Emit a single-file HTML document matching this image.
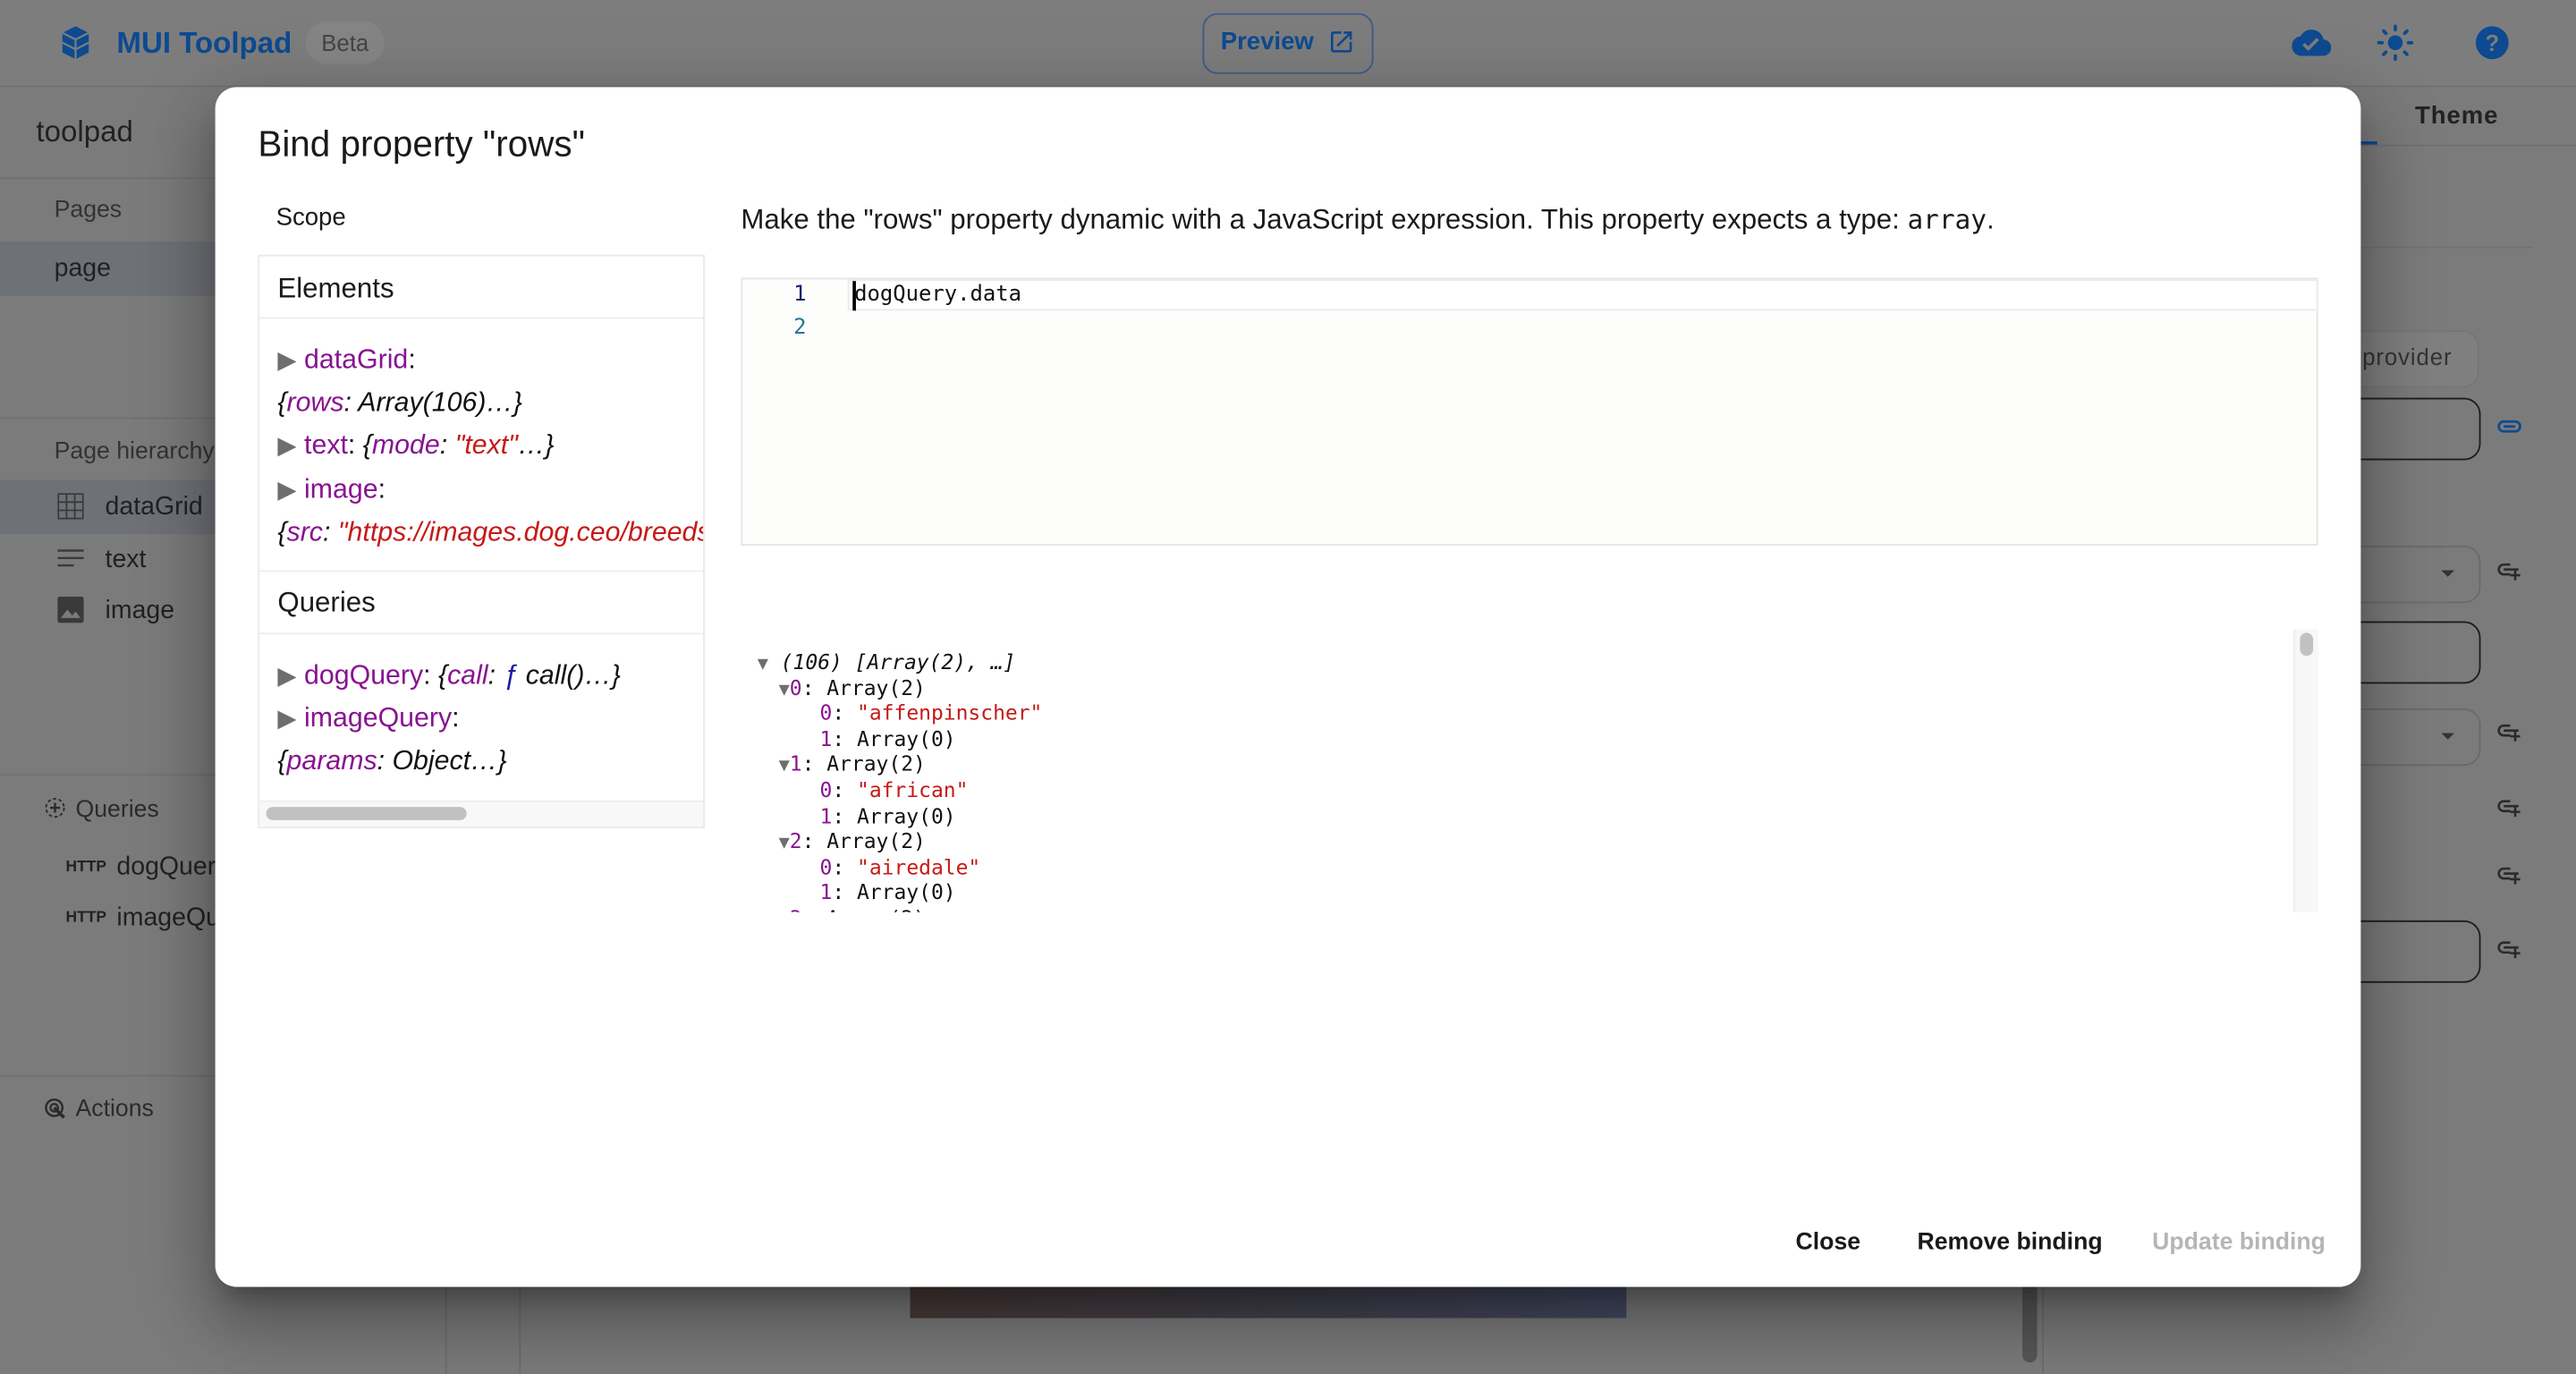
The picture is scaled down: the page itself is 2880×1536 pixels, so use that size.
<!DOCTYPE html>
<html><head><meta charset="utf-8"><style>
html,body{margin:0;padding:0;width:2880px;height:1536px;overflow:hidden;background:#7b7b7b}
#w{position:absolute;left:0;top:0;width:1568px;height:836px;transform:scale(1.83673,1.83732);transform-origin:0 0;font-family:"Liberation Sans",sans-serif;background:#7b7b7b;overflow:hidden}
.a{position:absolute;white-space:nowrap}
.dk{color:#1f2124}
.mono{font-family:"DejaVu Sans Mono","Liberation Mono",monospace}
.pu{color:#881391}.rd{color:#c41a16}
.tri{color:#6e6e6e;font-size:15px}
.jt div{height:15.6px}
.tr div{height:26.2px}
</style></head><body><div id="w">
<div class="a" style="left:0;top:0;width:1568px;height:52px;background:#7d7d7d;border-bottom:1px solid #717171"></div>
<svg class="a" style="left:36px;top:15px" width="20" height="22" viewBox="0 0 20 22"><path d="M2 5l8-4 8 4v12l-8 4-8-4z" fill="#0d4a91"/><path d="M2 5l8 4 8-4M10 9v12M2 11l8 4 8-4" stroke="#7d7d7d" stroke-width="1.2" fill="none"/></svg>
<div class="a" style="left:71px;top:16px;font-size:18px;font-weight:bold;color:#0d4a91">MUI Toolpad</div>
<div class="a" style="left:186px;top:13px;width:48px;height:26px;border-radius:13px;background:#858585;color:#444;font-size:14px;text-align:center;line-height:26px">Beta</div>
<div class="a" style="left:732px;top:8px;width:102px;height:35px;border:1px solid #3e5d86;border-radius:9px"></div>
<div class="a" style="left:743px;top:17px;font-size:15px;font-weight:bold;color:#0d4a91">Preview</div>
<svg class="a" style="left:808px;top:17px" width="17" height="17" viewBox="0 0 24 24"><path d="M19 19H5V5h7V3H5a2 2 0 0 0-2 2v14a2 2 0 0 0 2 2h14a2 2 0 0 0 2-2v-7h-2v7zM14 3v2h3.6l-9.8 9.8 1.4 1.4L19 6.4V10h2V3h-7z" fill="#0d4a91"/></svg>
<svg class="a" style="left:1395px;top:14px" width="24" height="24" viewBox="0 0 24 24"><path d="M19.35 10.04A7.49 7.49 0 0 0 12 4C9.11 4 6.6 5.64 5.35 8.04A5.994 5.994 0 0 0 0 14c0 3.310 2.69 6 6 6h13c2.76 0 5-2.240 5-5 0-2.640-2.050-4.780-4.650-4.960zM10 17l-3.5-3.5 1.41-1.41L10 14.17 15.18 9l1.41 1.41L10 17z" fill="#0d4a91"/></svg>
<svg class="a" style="left:1446px;top:14px" width="24" height="24" viewBox="0 0 24 24"><circle cx="12" cy="12" r="4.5" fill="#0d4a91"/><g stroke="#0d4a91" stroke-width="2" stroke-linecap="round"><path d="M12 2v2M12 20v2M2 12h2M20 12h2M4.9 4.9l1.4 1.4M17.7 17.7l1.4 1.4M4.9 19.1l1.4-1.4M17.7 6.3l1.4-1.4"/></g></svg>
<svg class="a" style="left:1505px;top:14px" width="24" height="24" viewBox="0 0 24 24"><circle cx="12" cy="12" r="10" fill="#0d4a91"/><text x="12" y="17" font-size="14" font-weight="bold" fill="#7d7d7d" text-anchor="middle" font-family="Liberation Sans">?</text></svg>
<div class="a dk" style="left:22px;top:70px;font-size:18px">toolpad</div>
<div class="a" style="left:0;top:108px;width:131px;height:1px;background:#717171"></div>
<div class="a" style="left:33px;top:120px;font-size:14.5px;color:#333">Pages</div>
<div class="a" style="left:0;top:147px;width:131px;height:33px;background:#6e7176"></div>
<div class="a dk" style="left:33px;top:155px;font-size:15.5px">page</div>
<div class="a" style="left:0;top:254px;width:131px;height:1px;background:#717171"></div>
<div class="a" style="left:33px;top:267px;font-size:14.5px;color:#333">Page hierarchy</div>
<div class="a" style="left:0;top:292px;width:131px;height:33px;background:#6e7176"></div>
<svg class="a" style="left:35px;top:300px" width="16" height="16" viewBox="0 0 16 16"><rect x="0.5" y="0.5" width="15" height="15" fill="none" stroke="#3a3a3a"/><path d="M5.5 0v16M10.5 0v16M0 5.5h16M0 10.5h16" stroke="#3a3a3a"/></svg>
<div class="a dk" style="left:64px;top:300px;font-size:15.5px">dataGrid</div>
<svg class="a" style="left:35px;top:334px" width="16" height="12"><path d="M0 1h16M0 5.5h16M0 10h10" stroke="#3a3a3a" stroke-width="1.3"/></svg>
<div class="a dk" style="left:64px;top:332px;font-size:15.5px">text</div>
<svg class="a" style="left:35px;top:363px" width="16" height="16" viewBox="0 0 16 16"><rect width="16" height="16" rx="1.5" fill="#3a3a3a"/><path d="M2 13l4-5 3 3.5 2-2.5 3 4z" fill="#7b7b7b"/></svg>
<div class="a dk" style="left:64px;top:363px;font-size:15.5px">image</div>
<div class="a" style="left:0;top:471px;width:131px;height:1px;background:#717171"></div>
<svg class="a" style="left:27px;top:485px" width="13" height="13" viewBox="0 0 13 13"><circle cx="6.5" cy="6.5" r="5.5" fill="none" stroke="#2a2a2a" stroke-dasharray="2 1.5"/><path d="M6.5 3.5v6M3.5 6.5h6" stroke="#2a2a2a" stroke-width="1.3"/></svg>
<div class="a" style="left:46px;top:485px;font-size:14.5px;color:#2b2b2b">Queries</div>
<div class="a" style="left:40px;top:522px;font-size:9.5px;font-weight:bold;color:#222">HTTP</div>
<div class="a dk" style="left:71px;top:519px;font-size:15.5px">dogQuery</div>
<div class="a" style="left:40px;top:553px;font-size:9.5px;font-weight:bold;color:#222">HTTP</div>
<div class="a dk" style="left:71px;top:550px;font-size:15.5px">imageQuery</div>
<div class="a" style="left:0;top:654px;width:131px;height:1px;background:#717171"></div>
<svg class="a" style="left:27px;top:668px" width="13" height="13" viewBox="0 0 13 13"><circle cx="6" cy="6" r="5" fill="none" stroke="#2a2a2a" stroke-width="1.3"/><circle cx="6" cy="6" r="2.3" fill="none" stroke="#2a2a2a" stroke-width="1.2"/><path d="M6 6l6 6" stroke="#2a2a2a" stroke-width="2"/></svg>
<div class="a" style="left:46px;top:667px;font-size:14.5px;color:#2b2b2b">Actions</div>
<div class="a" style="left:271px;top:783px;width:1px;height:60px;background:#6e6e6e"></div>
<div class="a" style="left:316px;top:783px;width:1px;height:60px;background:#6e6e6e"></div>
<div class="a" style="left:554px;top:783px;width:436px;height:19px;background:linear-gradient(90deg,#4b3b3a,#43424d 50%,#454a63)"></div>
<div class="a" style="left:1231px;top:783px;width:9px;height:46px;background:#575757;border-radius:0 0 5px 5px"></div>
<div class="a" style="left:1243px;top:783px;width:1px;height:60px;background:#6e6e6e"></div>
<div class="a" style="left:1437px;top:88px;width:131px;height:1px;background:#717171"></div>
<div class="a" style="left:1437px;top:86px;width:10px;height:2px;background:#0d4a91"></div>
<div class="a" style="left:1470px;top:62px;font-size:15px;font-weight:bold;color:#222;letter-spacing:.5px">Theme</div>
<div class="a" style="left:1437px;top:150px;width:105px;height:1px;background:#737373"></div>
<div class="a" style="left:1400px;top:201px;width:107px;height:33px;border-radius:10px;background:#7f7f7f;border:1px solid #767676"></div>
<div class="a" style="left:1438px;top:209px;font-size:14px;color:#333;letter-spacing:.5px">provider</div>
<div class="a" style="left:1400px;top:242px;width:108px;height:36px;border:1px solid #1e1e1e;border-radius:10px"></div>
<div class="a" style="left:1400px;top:332px;width:108px;height:33px;border:1px solid #6a6a6a;border-radius:10px"></div>
<div class="a" style="left:1486px;top:347px;border:4px solid transparent;border-top:4px solid #333"></div>
<div class="a" style="left:1400px;top:378px;width:108px;height:36px;border:1px solid #1e1e1e;border-radius:10px"></div>
<div class="a" style="left:1400px;top:431px;width:108px;height:33px;border:1px solid #6a6a6a;border-radius:10px"></div>
<div class="a" style="left:1486px;top:446px;border:4px solid transparent;border-top:4px solid #333"></div>
<div class="a" style="left:1400px;top:560px;width:108px;height:36px;border:1px solid #1e1e1e;border-radius:10px"></div>
<svg class="a" style="left:1520px;top:255px" width="15" height="10"><rect x="1" y="1.5" width="13" height="6" rx="3" fill="none" stroke="#0d4a91" stroke-width="1.5"/><path d="M4 4.5h7" stroke="#0d4a91" stroke-width="1.5"/></svg>
<svg class="a" style="left:1520px;top:342px" width="15" height="12"><path d="M8 1.5H4a3 3 0 0 0 0 6h4M4 4.5h9M11 4v7M8 8h6" stroke="#2a2a2a" stroke-width="1.4" fill="none"/></svg>
<svg class="a" style="left:1520px;top:440px" width="15" height="12"><path d="M8 1.5H4a3 3 0 0 0 0 6h4M4 4.5h9M11 4v7M8 8h6" stroke="#2a2a2a" stroke-width="1.4" fill="none"/></svg>
<svg class="a" style="left:1520px;top:486px" width="15" height="12"><path d="M8 1.5H4a3 3 0 0 0 0 6h4M4 4.5h9M11 4v7M8 8h6" stroke="#2a2a2a" stroke-width="1.4" fill="none"/></svg>
<svg class="a" style="left:1520px;top:527px" width="15" height="12"><path d="M8 1.5H4a3 3 0 0 0 0 6h4M4 4.5h9M11 4v7M8 8h6" stroke="#2a2a2a" stroke-width="1.4" fill="none"/></svg>
<svg class="a" style="left:1520px;top:572px" width="15" height="12"><path d="M8 1.5H4a3 3 0 0 0 0 6h4M4 4.5h9M11 4v7M8 8h6" stroke="#2a2a2a" stroke-width="1.4" fill="none"/></svg>
<div class="a" style="left:131px;top:53px;width:1306px;height:730px;background:#fff;border-radius:13px;box-shadow:0 11px 15px -7px rgba(0,0,0,.3),0 24px 38px 3px rgba(0,0,0,.2),0 9px 46px 8px rgba(0,0,0,.15)"></div>
<div class="a" style="left:157px;top:75px;font-size:22px;color:#1a1a1a">Bind property "rows"</div>
<div class="a" style="left:168px;top:124px;font-size:15px;color:#1a1a1a">Scope</div>
<div class="a" style="left:157px;top:155px;width:270px;height:347px;border:1px solid #eaeaea;overflow:hidden">
 <div class="a" style="left:11px;top:10px;font-size:17px;color:#1a1a1a">Elements</div>
 <div class="a" style="left:0;top:37px;width:272px;height:1px;background:#eeeeee"></div>
 <div class="a tr" style="left:11px;top:50px;font-size:16.5px;line-height:26.2px;color:#111">
  <div><span class="tri">▶</span> <span class="pu">dataGrid</span>:</div>
  <div style="font-style:italic"><span>{</span><span class="pu">rows</span>: Array(106)…}</div>
  <div><span class="tri">▶</span> <span class="pu">text</span>: <i>{<span class="pu">mode</span>: <span class="rd">"text"</span>…}</i></div>
  <div><span class="tri">▶</span> <span class="pu">image</span>:</div>
  <div style="font-style:italic">{<span class="pu">src</span>: <span class="rd">"https://images.dog.ceo/breeds/</span></div>
 </div>
 <div class="a" style="left:0;top:191px;width:272px;height:1px;background:#eeeeee"></div>
 <div class="a" style="left:11px;top:201px;font-size:17px;color:#1a1a1a">Queries</div>
 <div class="a" style="left:0;top:229px;width:272px;height:1px;background:#eeeeee"></div>
 <div class="a tr" style="left:11px;top:242px;font-size:16.5px;line-height:26.2px;color:#111">
  <div><span class="tri">▶</span> <span class="pu">dogQuery</span>: <i>{<span class="pu">call</span>: <span style="color:#1a1aa6">ƒ</span> call()…}</i></div>
  <div><span class="tri">▶</span> <span class="pu">imageQuery</span>:</div>
  <div style="font-style:italic">{<span class="pu">params</span>: Object…}</div>
 </div>
 <div class="a" style="left:0;top:331px;width:272px;height:16px;background:#f8f8f8;border-top:1px solid #eee"></div>
 <div class="a" style="left:4px;top:335px;width:122px;height:8px;border-radius:4px;background:#c1c1c1"></div>
</div>
<div class="a" style="left:451px;top:124px;font-size:17px;color:#1a1a1a">Make the "rows" property dynamic with a JavaScript expression. This property expects a type: <span class="mono" style="font-size:16px">array</span>.</div>
<div class="a" style="left:451px;top:169px;width:958px;height:161px;background:#fdfdfc;border:1px solid #e5e5e5"></div>
<div class="a" style="left:516px;top:170px;width:893px;height:17px;border:1px solid #eaeaea;background:#fff"></div>
<div class="a mono" style="left:483px;top:172px;font-size:13px;color:#0b216f">1</div>
<div class="a mono" style="left:483px;top:192px;font-size:13px;color:#237893">2</div>
<div class="a" style="left:519px;top:171px;width:1.5px;height:18px;background:#000"></div>
<div class="a mono" style="left:520px;top:172px;font-size:13px;color:#111">dogQuery.data</div>
<div class="a" style="left:451px;top:383px;width:960px;height:172px;overflow:hidden">
 <div class="a" style="left:945px;top:0;width:15px;height:172px;background:#f7f7f7;border-left:1px solid #eee;border-right:1px solid #eee"></div>
 <div class="a" style="left:949px;top:2px;width:8px;height:14px;border-radius:4px;background:#c1c1c1"></div>
 <div class="a mono jt" style="left:10px;top:12px;font-size:12.5px;line-height:15.6px;color:#111">
  <div><span style="color:#6e6e6e;font-size:11px">▼</span> <i>(106) [Array(2), …]</i></div>
  <div style="padding-left:13px"><span style="color:#6e6e6e;font-size:11px">▼</span><span class="pu">0</span>: Array(2)</div>
  <div style="padding-left:38px"><span class="pu">0</span>: <span class="rd">"affenpinscher"</span></div>
  <div style="padding-left:38px"><span class="pu">1</span>: Array(0)</div>
  <div style="padding-left:13px"><span style="color:#6e6e6e;font-size:11px">▼</span><span class="pu">1</span>: Array(2)</div>
  <div style="padding-left:38px"><span class="pu">0</span>: <span class="rd">"african"</span></div>
  <div style="padding-left:38px"><span class="pu">1</span>: Array(0)</div>
  <div style="padding-left:13px"><span style="color:#6e6e6e;font-size:11px">▼</span><span class="pu">2</span>: Array(2)</div>
  <div style="padding-left:38px"><span class="pu">0</span>: <span class="rd">"airedale"</span></div>
  <div style="padding-left:38px"><span class="pu">1</span>: Array(0)</div>
  <div style="padding-left:13px"><span style="color:#6e6e6e;font-size:11px">▼</span><span class="pu">3</span>: Array(2)</div>
 </div>
</div>
<div class="a" style="left:1093px;top:748px;font-size:14.5px;font-weight:bold;color:#1a1a1a">Close</div>
<div class="a" style="left:1167px;top:748px;font-size:14.5px;font-weight:bold;color:#1a1a1a">Remove binding</div>
<div class="a" style="left:1310px;top:748px;font-size:14.5px;font-weight:bold;color:#b5b5b5">Update binding</div>
</div></body></html>
